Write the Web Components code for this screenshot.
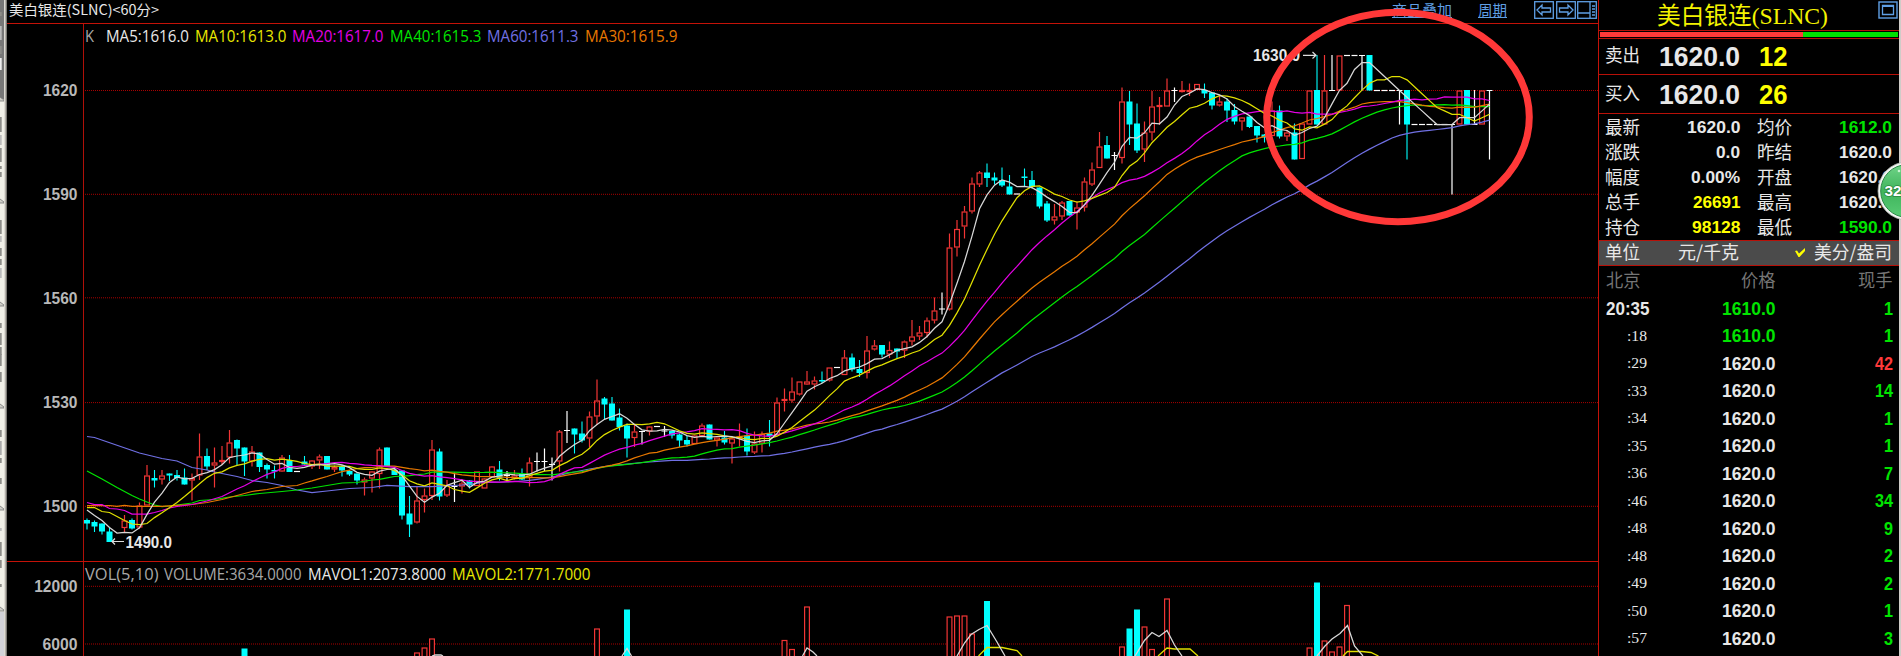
<!DOCTYPE html>
<html lang="zh-CN">
<head>
<meta charset="utf-8">
<title>美白银连(SLNC)</title>
<style>
    html, body {
        margin: 0;
        height: 656px;
        background: #000;
        overflow: hidden;
    }
</style>
</head>
<body>
<trade-desk></trade-desk>

<script>
const SANS = "'Liberation Sans', 'Noto Sans CJK SC', sans-serif";
const CJK = "'Noto Sans CJK SC', 'Liberation Sans', sans-serif";
const SERIF = "'Liberation Serif', 'Noto Sans CJK SC', serif";
const UI = "'Open Sans', 'Noto Sans', sans-serif";
const RED = '#f23535';
const CYAN = '#00ffff';
const WHITE = '#e8e8e8';

// [index, type, high, body top, body bottom, low], type: r = up, c = down, w = flat
const CANDLES = `
0 c 518.5 520 523.5 529.5|1 c 520.5 522 526.5 532|2 c 523.5 523.5 531.5 534.5|3 c 527.5 531.5 542 542
5 r 515 520.5 528 532.5|6 c 518.5 520 528.5 529.5|7 r 502.5 505.5 527.5 528.5|8 r 465 475.5 505.5 505.5|9 c 470 478 480.5 487.5
10 r 470 475.5 479.5 484.5|11 c 473.5 473.5 475.5 481|12 c 470 475 478 480.5|13 c 468.5 477.5 484.5 484.5|14 r 473.5 478 480.5 500.5
15 r 433.5 456.5 475.5 480|16 c 448.5 456 466.5 470|17 r 447.5 462.5 465.5 487.5|18 r 446 460 462 465|19 r 430 442.5 457.5 463.5
20 c 439.5 440 448.5 465|21 c 447.5 447.5 461.5 476|22 r 446 451.5 461.5 466.5|23 c 452.5 452.5 467 472|24 c 463.5 465 469.5 478.5
25 c 465.5 470 471.5 478.5|26 r 455 457.5 471.5 472|27 c 455 460 472 472|28 w 471.5 471.5 471.5 471.5|29 c 456 461.5 464.5 464.5
30 r 460 460.5 466.5 469|31 r 454.5 456.5 460.5 469|32 c 456 456 469.5 469.5|33 r 465.5 467 469.5 472|34 c 465 466.5 470.5 476.5
35 c 470 471 474.5 476|36 c 473.5 473.5 480.5 484.5|37 r 477.5 479.5 482.5 495.5|38 r 471 471.5 478.5 492.5|39 r 447.5 449.5 474 488.5
40 c 447.5 447.5 466.5 466.5|41 c 467 470 475 475|42 c 470.5 470.5 515.5 519.5|43 c 496 513.5 524.5 537|44 r 486.5 500.5 522.5 523.5
45 r 488.5 495.5 500 512.5|46 r 440 449.5 496 500|47 c 448.5 451.5 496.5 500.5|48 r 480 485 495.5 497|49 w 472.5 486.5 486.5 502
50 r 480 483.5 486.5 493.5|51 c 480 480.5 485.5 488.5|52 r 471.5 471.5 486 486|53 r 478 478.5 488.5 488.5|54 r 466 466.5 477.5 477.5
55 c 461 469.5 478 480.5|56 w 471 475.5 475.5 480.5|57 r 470 475.5 478.5 479.5|58 c 468.5 474 479.5 480|59 r 457.5 462.5 477.5 486.5
60 w 452.5 461.5 461.5 471.5|61 w 448.5 461.5 461.5 471|62 w 457.5 464.5 464.5 480.5|63 r 430 431.5 461.5 471.5|64 w 411 430.5 430.5 443
65 c 428.5 428.5 434.5 453.5|66 c 421.5 433.5 440.5 442.5|67 r 411.5 416.5 438.5 447.5|68 r 379.5 400.5 416.5 425|69 c 397 398.5 404.5 419.5
70 c 397 403.5 420.5 420.5|71 c 408.5 417.5 427 430.5|72 c 423.5 425.5 438.5 457.5|73 r 425 431.5 438 447|74 w 431 431.5 431.5 444.5
75 r 426 426.5 431.5 435.5|76 w 426.5 426.5 426.5 426.5|77 w 426 431 431 437|78 c 430.5 431 435.5 438.5|79 c 433.5 434.5 440.5 447
80 c 436 440 444.5 446.5|81 r 435 435.5 444 444|82 r 423.5 425.5 436 437|83 c 424.5 424.5 439.5 439.5|84 r 436 437.5 440.5 446.5
85 c 431 437.5 442.5 444.5|86 r 437.5 438.5 443.5 463.5|87 r 423.5 436.5 438.5 446.5|88 c 428.5 435.5 451.5 455.5|89 r 431.5 443.5 452.5 454
90 r 431.5 434 443.5 452.5|91 c 420 433.5 436 446.5|92 r 397.5 402.5 435 436|93 r 388.5 399 401 411.5|94 r 377.5 391.5 400.5 402.5
95 r 381.5 381.5 394.5 395.5|96 r 371 381.5 384.5 385|97 r 376.5 380.5 384.5 389.5|98 c 371.5 380 381.5 383|99 r 367.5 367.5 380.5 381.5
100 w 367.5 367.5 367.5 367.5|101 r 350 357.5 375 375|102 c 353.5 357.5 369.5 371.5|103 c 360 369 373 377|104 r 336 350.5 373 378.5
105 r 340 345.5 349.5 350.5|106 c 345 345 354.5 357.5|107 r 341.5 350 354.5 358|108 c 348.5 348.5 351.5 358.5|109 r 340.5 341.5 350.5 358
110 r 320 336.5 341.5 345.5|111 r 326 332.5 336.5 340|112 r 317.5 320.5 333 337.5|113 r 297.5 310.5 320.5 323.5|114 w 292.5 309 309 314.5
115 r 233.5 247.5 309.5 310.5|116 r 220 229 247.5 256.5|117 r 206 211.5 226.5 238.5|118 r 177.5 183.5 211.5 213.5|119 r 171 172.5 184.5 187
120 c 163.5 172.5 178 187|121 c 172.5 177.5 180.5 184.5|122 c 167.5 180 185.5 187|123 c 175 186.5 194.5 194.5|124 w 194 194 194 194
125 c 168.5 176.5 177.5 186|126 c 171 180 187 188.5|127 c 187.5 187.5 206.5 208.5|128 c 201 203.5 220.5 222|129 r 204 216.5 220.5 224.5
130 r 201 202.5 216.5 220|131 c 201 201 215.5 215.5|132 r 201.5 207.5 212.5 229.5|133 r 177.5 181.5 207.5 211.5|134 r 162.5 169.5 184.5 186
135 r 132 146.5 168 168|136 c 136 145 158.5 158.5|137 w 152 155.5 155.5 170|138 r 87.5 101.5 158 163.5|139 c 91 101.5 124.5 145
140 c 103.5 123.5 150.5 153|141 r 121.5 132.5 149.5 162|142 r 91 106.5 132.5 140.5|143 r 97 105 107 125|144 r 78.5 90.5 106.5 106.5
145 w 87.5 90.5 90.5 102|146 r 81 90 92 92.5|147 r 83.5 90 92 96|148 r 84 84 89.5 90|149 c 83.5 90 93.5 98
150 c 92.5 92.5 105.5 109.5|151 r 96 101.5 105.5 106.5|152 c 98.5 101.5 110.5 122|153 c 104 110 121.5 124.5|154 r 117 117.5 121.5 130.5
155 c 116.5 116.5 127 128|156 c 126 126 135.5 142.5|157 c 134 134.5 137.5 142.5|158 r 101.5 110.5 136 136|159 c 105.5 110.5 136.5 138.5
160 r 130 132.5 136.5 141|161 c 123.5 132.5 159.5 159.5|162 r 123.5 123.5 159 159|163 r 90.5 90.5 124.5 124.5|164 c 55 90 124.5 124.5
165 r 55 90.5 124.5 124.5|166 w 55 90.5 90.5 90.5|167 r 55.5 55.5 90.5 90.5|168 w 55.5 55.5 55.5 55.5|169 w 55.5 55.5 55.5 55.5
170 w 55.5 55.5 55.5 90.5|171 c 55 55 90.5 90.5|172 w 90.5 90.5 90.5 90.5|173 w 90.5 90.5 90.5 90.5|174 w 90.5 90.5 90.5 90.5
175 w 90.5 90.5 90.5 124.5|176 c 90 90 124.5 159.5|177 w 124.5 124.5 124.5 124.5|178 w 124.5 124.5 124.5 124.5|179 w 124.5 124.5 124.5 124.5
180 w 124.5 124.5 124.5 124.5|181 w 124.5 124.5 124.5 124.5|182 w 124.5 124.5 124.5 194.5|183 r 90.5 90.5 124.5 124.5|184 c 90 90 124.5 124.5
185 w 90 124.5 124.5 124.5|186 r 90.5 90.5 124.5 124.5|187 w 90.5 90.5 90.5 159.5`
    .trim().split(/[|\n]/).map((row) => {
        const [i, type, ...levels] = row.trim().split(' ');
        const [high, top, bottom, low] = levels.map(Number);
        return { i: +i, type, high, top, bottom, low };
    });

// moving averages: the lead holds the part that needs bars from before the first one
const AVERAGES = [
    { n: 60, color: '#7070e4', lead: [[0, 436.5], [1, 437.5], [7, 453], [10, 458.5], [12, 461], [14, 467.5], [16, 470], [17, 472], [20, 476.5], [22, 480.5], [24, 482.5], [26, 485.5], [28, 490], [30, 492.5], [32, 491], [35, 488.5], [38, 487.5], [40, 485.5], [43, 486.5], [46, 486.5], [50, 485], [53, 482.5], [56, 482], [58, 481]] },
    { n: 40, color: '#00e400', lead: [[0, 471], [2, 479], [4, 487.5], [6, 495.5], [7, 499], [9, 505], [10, 506.5], [11, 506], [12, 505], [14, 503], [15, 500.5], [17, 499.5], [19, 497], [21, 495.5], [23, 493.5], [26, 491.5], [28, 490], [30, 488], [34, 483], [36, 482.5], [38, 480]] },
    { n: 30, color: '#e87800', lead: [[0, 505.5], [3, 505.5], [4, 506.3], [5, 505.5], [6, 506.3], [10, 506.3], [12, 505.3], [14, 504.5], [16, 502.5], [18, 499.5], [20, 495.5], [22, 491.5], [24, 489.5], [26, 486.5], [28, 485.5]] },
    { n: 20, color: '#e400e4', lead: [[0, 502.5], [1, 504.5], [2, 504.5], [3, 508.5], [4, 509], [5, 510.5], [6, 514], [8, 514], [9, 512.5], [10, 510.5], [11, 508], [12, 506.5], [14, 504.5], [16, 501], [18, 496.5]] },
    { n: 10, color: '#e0e000', lead: [[0, 507.5], [1, 507.5], [2, 511.5], [3, 512.5], [4, 516.5], [5, 520.5], [6, 524], [7, 524.5], [8, 523.5]] },
    { n: 5, color: '#d8d8d8', lead: [[0, 510], [1, 515.5], [2, 520.5], [3, 527.5]] }
];

const barX = (i) => 87 + i * 7.5;

class BaseElement extends HTMLElement {
    constructor() {
        super();
        this.attachShadow({ mode: 'open' });
    }

    connectedCallback() {
        this.shadowRoot.innerHTML = this.render();
    }
}

// one line of text set to an exact width
class FitText extends BaseElement {
    render() {
        const w = +this.getAttribute('w');
        const size = +this.getAttribute('size') || 16;
        const h = Math.round(size * 1.3);
        const text = this.getAttribute('text');
        const weight = this.hasAttribute('bold') ? 700 : 400;
        const fonts = { cjk: CJK, serif: SERIF, ui: UI, sans: SANS };
        return /*html*/`
            <style>
                :host { display: block; flex: none; width: ${w}px; height: ${h}px; color: ${this.getAttribute('color') || WHITE}; }
                svg { display: block; overflow: visible; }
                text { font: ${weight} ${size}px ${fonts[this.getAttribute('font') || 'sans']}; fill: currentColor; white-space: pre; }
            </style>
            <svg width="${w}" height="${h}"><text x="0" y="${h / 2 + size * 0.36}" textLength="${w}" lengthAdjust="spacingAndGlyphs">${text}</text></svg>
        `;
    }
}

class SideTabs extends BaseElement {
    render() {
        const marks = [[12, 4], [26, 14, '#bbb'], [46, 8], [58, 12, '#eee'], [117, 15], [135, 10, '#bbb'], [148, 14], [166, 3], [172, 5], [220, 14], [236, 6, '#bbb'],
            [248, 8], [259, 6], [268, 10, '#bbb'], [323, 5], [333, 12], [347, 8], [354, 12], [372, 10], [430, 7], [441, 14, '#aaa'], [458, 5], [478, 6], [528, 3, '#bbb'], [542, 14], [560, 8], [584, 3]];
        const ends = [202, 305, 407, 509, 610];
        return /*html*/`
            <style>
                :host { display: block; width: 7px; flex: none; background: #f0efe7; }
                svg { display: block; }
            </style>
            <svg width="7" height="656">
                <rect width="4" height="99" fill="#777"/>
                <rect y="612" width="4" height="44" fill="#d2d2d8"/>
                ${marks.map(([y, h, color = '#8c8c88']) => `<rect y="${y}" width="1.7" height="${h}" fill="${color}"/>`).join('')}
                ${[100, ...ends].map((y) => `<path d="M0 ${y - 3}L4 ${y}V${y + 1}H0" fill="#d0cfc8" stroke="#777" stroke-width=".8"/>`).join('')}
                <rect x="4" width="1" height="656" fill="#dddbd3"/>
                <rect x="5" width="1.6" height="656" fill="#b2aea8"/>
                <rect x="6.6" width=".4" height="656" fill="#000"/>
            </svg>
        `;
    }
}

class ChartToolbar extends BaseElement {
    render() {
        return /*html*/`
            <style>
                :host { display: flex; height: 22.5px; align-items: flex-start; padding: 0 1px 0 1.5px; box-sizing: border-box; color: #5f9fe4; }
                .name { margin: 1px auto 0 0; }
                .link { border-bottom: 1px solid currentColor; height: 18px; box-sizing: border-box; padding-top: 1px; }
                .link + .link { margin-left: 26px; }
                .tools { display: flex; gap: 1.5px; margin: 1px 0 0 27px; }
                svg { display: block; fill: none; stroke: currentColor; stroke-width: 1.3; }
            </style>
            <fit-text class="name" text="美白银连(SLNC)&lt;60分&gt;" w="150" size="14" font="cjk"></fit-text>
            <div class="link"><fit-text text="商品叠加" w="60" size="14.5" font="cjk" color="#5f9fe4"></fit-text></div>
            <div class="link"><fit-text text="周期" w="29" size="14.5" font="cjk" color="#5f9fe4"></fit-text></div>
            <div class="tools">
                <svg width="20" height="18"><rect x=".7" y=".7" width="18.6" height="16.6"/><path d="M3 9L8 4V7H16.5V11H8V14Z"/></svg>
                <svg width="20" height="18"><rect x=".7" y=".7" width="18.6" height="16.6"/><path d="M17 9L12 4V7H3.5V11H12V14Z"/></svg>
                <svg width="20" height="18"><rect x=".7" y=".7" width="18.6" height="16.6"/><path d="M13 1V17M1 12H13"/><path d="M15 5H18M15 8H18M15 11H18M15 14H18"/></svg>
            </div>
        `;
    }
}

class ChartLegend extends BaseElement {
    render() {
        const items = JSON.parse(this.getAttribute('items'));
        return /*html*/`
            <style>
                :host { display: flex; gap: 6px; height: 21px; padding-left: 77.5px; }
            </style>
            ${items.map(([text, w, color]) => `<fit-text text="${text}" w="${w}" size="15.5" font="ui" color="${color}"></fit-text>`).join('')}
        `;
    }
}

class PriceChart extends BaseElement {
    candle({ i, type, high, top, bottom, low }) {
        const x = barX(i);
        if (type === 'r') {
            return `<g stroke="${RED}" fill="none" stroke-width="1.2"><path d="M${x} ${high}V${top}M${x} ${bottom}V${low}"/>
                <rect x="${x - 2.4}" y="${top + 0.5}" width="4.8" height="${Math.max(bottom - top - 1, 0.6)}"/></g>`;
        }
        if (type === 'c') {
            return `<path d="M${x} ${high}V${low}" stroke="${CYAN}" stroke-width="1.1"/><rect x="${x - 3}" y="${top}" width="6" height="${Math.max(bottom - top, 1.5)}" fill="${CYAN}"/>`;
        }
        return `<path d="M${x - 3} ${top}h6M${x} ${high}V${low}" stroke="#fff" stroke-width="1.2"/>`;
    }

    average({ n, color, lead }) {
        const closes = [];
        CANDLES.forEach((c) => {
            closes[c.i] = c.type === 'c' ? c.bottom : c.top;
        });
        closes[4] = 542;
        const points = lead.map(([i, y]) => `${barX(i)},${y}`);
        for (let i = n - 1; i < closes.length; i++) {
            const sum = closes.slice(i - n + 1, i + 1).reduce((a, b) => a + b, 0);
            points.push(`${barX(i)},${(sum / n).toFixed(1)}`);
        }
        return `<polyline points="${points.join(' ')}" fill="none" stroke="${color}" stroke-width="1.25"/>`;
    }

    render() {
        const grid = [[1620, 90.5], [1590, 194.3], [1560, 297.8], [1530, 402.6], [1500, 506.3]];
        return /*html*/`
            <style>
                :host { display: block; height: 517px; }
                svg { display: block; }
                .axis { font: bold 16.5px ${SANS}; fill: #b8b8b8; }
                .mark { font: bold 16px ${SANS}; fill: ${WHITE}; }
            </style>
            <svg width="1591" height="517" viewBox="7 44 1591 517">
                ${grid.map(([v, y]) => `<path d="M85 ${y}H1598" stroke="#a80000" stroke-dasharray="1 1"/>
                <text class="axis" x="43" y="${y + 5.8}" textLength="34.5" lengthAdjust="spacingAndGlyphs">${v}</text>`).join('')}
                ${CANDLES.map(this.candle).join('')}
                ${AVERAGES.map(this.average).join('')}
                <text class="mark" x="125.5" y="547.5" textLength="46.5" lengthAdjust="spacingAndGlyphs">1490.0</text>
                <path d="M124 541.5H112M115 538.5L112 541.5L115 544.5" fill="none" stroke="#ddd" stroke-width="1.2"/>
                <text class="mark" x="1253" y="61" textLength="47" lengthAdjust="spacingAndGlyphs">1630.0</text>
                <path d="M1303 55.3H1316M1312.5 52L1316 55.3L1312.5 58.5" fill="none" stroke="#ddd" stroke-width="1.2"/>
            </svg>
        `;
    }
}

class VolumeChart extends BaseElement {
    render() {
        const bars = [[21, 'c', 648.5], [44, 'r', 652.5], [45, 'r', 647.5], [46, 'r', 638.5], [68, 'r', 628.5], [72, 'c', 609.5], [93, 'r', 640], [94, 'r', 649], [96, 'r', 606.5],
            [115, 'r', 616.5], [116, 'r', 615.5], [117, 'r', 615.5], [118, 'r', 633.5], [120, 'c', 601], [138, 'r', 646.5], [139, 'c', 628.5], [140, 'c', 609.5], [141, 'r', 626.5],
            [142, 'r', 649], [144, 'r', 598.5], [163, 'r', 647.5], [164, 'c', 582.5], [165, 'r', 640.5], [166, 'r', 651.5], [167, 'r', 646.5], [168, 'r', 605]];
        const fast = ['432,656 435,655 441,655 443,656', '622,656 627,648.5 631.5,656', '802.5,656 807,648 813,652 817,656',
            '957,656 964.5,643 971,634.5 979,629.5 987,625.5 997,642 1005,656',
            '1135,656 1144.5,640.5 1152,632.5 1159,636.5 1167,630.5 1174.5,645 1182,656',
            '1317,656 1324.5,646.5 1332,639 1340,633.5 1347.5,625.5 1354.5,646 1363,656'];
        const slow = ['978.5,656 987,647.5 1002,647.5 1017,650.5 1022,656', '1158,656 1167,648 1174.5,649 1190,649 1198,656',
            '1343,656 1347.5,651.5 1362,651.5 1371,652.5 1378.5,656'];
        const bar = ([i, type, y]) => type === 'r'
            ? `<rect x="${barX(i) - 2.4}" y="${y + 0.5}" width="4.8" height="80" fill="#000" stroke="${RED}" stroke-width="1.2"/>`
            : `<rect x="${barX(i) - 3}" y="${y}" width="6" height="80" fill="${CYAN}"/>`;
        const line = (color) => (points) => `<polyline points="${points}" fill="none" stroke="${color}" stroke-width="1.3"/>`;
        return /*html*/`
            <style>
                :host { display: block; height: 76px; }
                svg { display: block; }
                text { font: bold 16.5px ${SANS}; fill: #b8b8b8; }
            </style>
            <svg width="1591" height="76" viewBox="7 580 1591 76">
                <path d="M85 586.3H1598M85 644H1598" stroke="#a80000" stroke-dasharray="1 1"/>
                <text x="34.2" y="592.3" textLength="43.3" lengthAdjust="spacingAndGlyphs">12000</text>
                <text x="42.5" y="650" textLength="35" lengthAdjust="spacingAndGlyphs">6000</text>
                ${bars.map(bar).join('')}
                ${slow.map(line('#e0e000')).join('')}
                ${fast.map(line('#d8d8d8')).join('')}
            </svg>
        `;
    }
}

class ChartPane extends BaseElement {
    render() {
        const ma = [['K', 9, '#a8a8a8'], ['', 0, '#000'], ['MA5:1616.0', 83, WHITE], ['MA10:1613.0', 91.5, '#e8e800'], ['MA20:1617.0', 91.5, '#e400e4'],
            ['MA40:1615.3', 91.5, '#00e400'], ['MA60:1611.3', 91.5, '#7070e4'], ['MA30:1615.9', 92.5, '#e87800']];
        const vol = [['VOL(5,10)', 73.5, '#a8a8a8'], ['VOLUME:3634.0000', 137.5, '#a8a8a8'], ['MAVOL1:2073.8000', 138, WHITE], ['MAVOL2:1771.7000', 138.5, '#e8e800']];
        return /*html*/`
            <style>
                :host { display: flex; flex-direction: column; width: 1591px; flex: none; height: 656px;
                    background: linear-gradient(#b01008, #b01008) 76px 23px / 1.3px 633px no-repeat #000; }
                .rule { height: 1.3px; margin-bottom: -1.3px; background: #c41208; flex: none; }
                chart-toolbar, chart-legend, price-chart, volume-chart { flex: none; }
                .ma { padding-top: 3.5px; height: 18px; }
                .vol { padding-top: 3px; height: 16px; }
            </style>
            <chart-toolbar></chart-toolbar>
            <div class="rule"></div>
            <chart-legend class="ma" items='${JSON.stringify(ma)}'></chart-legend>
            <price-chart></price-chart>
            <div class="rule"></div>
            <chart-legend class="vol" items='${JSON.stringify(vol)}'></chart-legend>
            <volume-chart></volume-chart>
        `;
    }
}

class QuoteHead extends BaseElement {
    side(label, price, count) {
        return `<div class="side"><fit-text text="${label}" w="35" size="18" font="cjk"></fit-text>
            <fit-text class="price" text="${price}" w="81" size="28" bold></fit-text>
            <fit-text text="${count}" w="28.5" size="28" color="#ffff00" bold></fit-text></div>`;
    }

    render() {
        return /*html*/`
            <style>
                :host { display: block; }
                .title { display: flex; align-items: flex-start; height: 29.5px; padding-left: 58px; }
                svg { display: block; margin: 1px 0 0 50px; }
                .ratio { display: flex; height: 5px; padding: 1px 1.5px 1px 1px; border: solid #b81008; border-width: 1px 0; margin-bottom: -1.5px; }
                .ratio i { background: #00e000; flex: 1; }
                .ratio i:first-child { background: #ff3a3a; flex: 0 0 202.5px; }
                .side { display: flex; align-items: center; height: 37.3px; padding-left: 5.5px; border-bottom: 1.3px solid #b81008; }
                .price { margin: 0 19px 0 19px; }
            </style>
            <div class="title">
                <fit-text text="美白银连(SLNC)" w="171" size="23.5" font="serif" color="#f4f400"></fit-text>
                <svg width="20" height="18" fill="none" stroke="#5f9fe4"><rect x="1" y="1" width="18" height="16" stroke-width="1.4"/><path d="M4.5 4.5H15.5V13.5H4.5Z" stroke-width="1.3"/><path d="M4.5 5H15.5" stroke-width="2"/></svg>
            </div>
            <div class="ratio"><i></i><i></i></div>
            ${this.side('卖出', '1620.0', '12')}
            ${this.side('买入', '1620.0', '26')}
        `;
    }
}

class QuoteGrid extends BaseElement {
    render() {
        const rows = [
            ['最新', '1620.0', 53.5, WHITE, '均价', '1612.0', '#00e400'],
            ['涨跌', '0.0', 24, WHITE, '昨结', '1620.0', WHITE],
            ['幅度', '0.00%', 49, WHITE, '开盘', '1620.0', WHITE],
            ['总手', '26691', 47.5, '#ffff00', '最高', '1620.0', WHITE],
            ['持仓', '98128', 48.5, '#ffff00', '最低', '1590.0', '#00e400']
        ];
        return /*html*/`
            <style>
                :host { display: grid; grid-template-columns: 100px 35.5px 17px 35px 1fr; grid-auto-rows: 25px; align-items: center; padding: 1px 7px 0 5.5px; height: 125px; }
                .value { justify-self: end; }
                .left { grid-column: 1 / 3; display: flex; justify-content: space-between; align-items: center; }
                .label { grid-column: 4; }
            </style>
            ${rows.map(([a, av, w, ac, b, bv, bc]) => `
            <div class="left"><fit-text text="${a}" w="35" size="18" font="cjk"></fit-text><fit-text text="${av}" w="${w}" size="17" color="${ac}" bold></fit-text></div>
            <fit-text class="label" text="${b}" w="35" size="18" font="cjk"></fit-text>
            <fit-text class="value" text="${bv}" w="53" size="17" color="${bc}" bold></fit-text>`).join('')}
        `;
    }
}

class UnitBar extends BaseElement {
    render() {
        return /*html*/`
            <style>
                :host { display: flex; align-items: center; height: 24.2px; padding: 0 7.5px 0 5.5px; background: #4b4b4b; border: solid #b81008; border-width: 1.2px 0; }
                .kg { margin-left: 38px; }
                svg { margin: 0 8px 0 auto; }
            </style>
            <fit-text text="单位" w="35" size="18" font="cjk"></fit-text>
            <fit-text class="kg" text="元/千克" w="61" size="18" font="cjk"></fit-text>
            <svg width="11" height="11"><path d="M0 4L2 3.5L4 6.5L10 1V4L4.5 10H3.5Z" fill="#ffff00"/></svg>
            <fit-text text="美分/盎司" w="78" size="18" font="cjk"></fit-text>
        `;
    }
}

class TickList extends BaseElement {
    render() {
        const green = '#00e400';
        const ticks = [['20:35', '1610.0', '1', green], [':18', '1610.0', '1', green], [':29', '1620.0', '42', '#ff3a3a'], [':33', '1620.0', '14', green],
            [':34', '1620.0', '1', green], [':35', '1620.0', '1', green], [':36', '1620.0', '7', green], [':46', '1620.0', '34', green], [':48', '1620.0', '9', green],
            [':48', '1620.0', '2', green], [':49', '1620.0', '2', green], [':50', '1620.0', '1', green], [':57', '1620.0', '3', green]];
        return /*html*/`
            <style>
                :host { display: block; }
                .row { display: grid; grid-template-columns: 50px 121px 1fr; align-items: center; height: 27.53px; padding: 0 6.5px 0 5.5px; }
                .row.head { height: 28.5px; }
                .row > * { justify-self: end; }
                .row > .start { justify-self: start; margin-left: 1px; }
                .sec { margin-right: 8px; }
            </style>
            <div class="row head">
                <fit-text class="start" text="北京" w="34.5" size="18" font="cjk" color="#757575"></fit-text>
                <fit-text text="价格" w="34.5" size="18" font="cjk" color="#757575"></fit-text>
                <fit-text text="现手" w="34.5" size="18" font="cjk" color="#757575"></fit-text>
            </div>
            ${ticks.map(([time, price, count, color], i) => `<div class="row">
                ${i === 0 ? `<fit-text class="start" text="${time}" w="43.5" size="18" bold></fit-text>` : `<fit-text class="sec" text="${time}" w="20" size="15" font="serif"></fit-text>`}
                <fit-text text="${price}" w="53.5" size="18" color="${price === '1610.0' ? green : WHITE}" bold></fit-text>
                <fit-text text="${count}" w="${count.length * 9}" size="18" color="${color}" bold></fit-text>
            </div>`).join('')}
        `;
    }
}

class QuotePanel extends BaseElement {
    render() {
        return /*html*/`
            <style>
                :host { display: flex; flex-direction: column; flex: 1; height: 656px; box-sizing: border-box; border-left: 1px solid #c41208; border-right: 2px solid #d0ccc8; overflow: hidden; }
                quote-head, quote-grid, unit-bar, tick-list { flex: none; }
            </style>
            <quote-head></quote-head>
            <quote-grid></quote-grid>
            <unit-bar></unit-bar>
            <tick-list></tick-list>
        `;
    }
}

// red ring drawn over the latest bars
class MarkerRing extends BaseElement {
    render() {
        return /*html*/`
            <style>
                :host { position: absolute; left: 1263px; top: 8px; pointer-events: none; }
                svg { display: block; }
            </style>
            <svg width="271" height="218"><ellipse cx="135" cy="109" rx="131.3" ry="104.8" fill="none" stroke="#ff3838" stroke-width="7"/></svg>
        `;
    }
}

class FloatBall extends BaseElement {
    render() {
        return /*html*/`
            <style>
                :host { position: absolute; left: 1877px; top: 161px; width: 24px; height: 60px; overflow: hidden; }
                svg { display: block; }
                text { font: bold 14px ${SANS}; fill: #fff; paint-order: stroke; stroke: #2c8a40; stroke-width: 1.5px; }
            </style>
            <svg width="60" height="60">
                <defs><linearGradient id="g" x1="0" y1="0" x2="0" y2="1"><stop offset="0" stop-color="#70d488"/><stop offset=".5" stop-color="#3fb45c"/><stop offset="1" stop-color="#58cc74"/></linearGradient></defs>
                <circle cx="30" cy="30" r="29" fill="#f2f4f2" stroke="#aab0aa" stroke-width=".8"/>
                <circle cx="30" cy="30" r="26.3" fill="url(#g)" stroke="#2c8a48" stroke-width="1"/>
                <circle cx="22" cy="10" r="1.3" fill="#c8f4d0"/>
                <text x="7.5" y="34.5" textLength="17" lengthAdjust="spacingAndGlyphs">32</text>
            </svg>
        `;
    }
}

class TradeDesk extends BaseElement {
    render() {
        return /*html*/`
            <style>
                :host { display: flex; position: relative; width: 1901px; height: 656px; overflow: hidden; background: #000; }
            </style>
            <side-tabs></side-tabs>
            <chart-pane></chart-pane>
            <quote-panel></quote-panel>
            <marker-ring></marker-ring>
            <float-ball></float-ball>
        `;
    }
}

customElements.define('fit-text', FitText);
customElements.define('side-tabs', SideTabs);
customElements.define('chart-toolbar', ChartToolbar);
customElements.define('chart-legend', ChartLegend);
customElements.define('price-chart', PriceChart);
customElements.define('volume-chart', VolumeChart);
customElements.define('chart-pane', ChartPane);
customElements.define('quote-head', QuoteHead);
customElements.define('quote-grid', QuoteGrid);
customElements.define('unit-bar', UnitBar);
customElements.define('tick-list', TickList);
customElements.define('quote-panel', QuotePanel);
customElements.define('marker-ring', MarkerRing);
customElements.define('float-ball', FloatBall);
customElements.define('trade-desk', TradeDesk);
</script>
</body>
</html>
